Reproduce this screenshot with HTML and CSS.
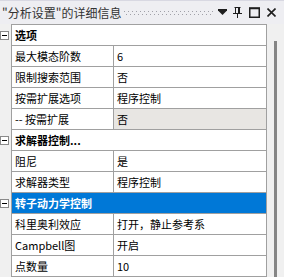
FILE: index.html
```html
<!DOCTYPE html>
<html lang="zh-CN">
<head>
<meta charset="UTF-8" />
<title>"分析设置"的详细信息</title>
<link rel="stylesheet" href="styles.css">
</head>
<body>

<div class="panel">
  <div class="titlebar">
    <span class="title">"分析设置"的详细信息</span>
    <span class="grip"></span>
    <div class="tools">
      <svg width="9" height="7" viewBox="0 0 9 7"><polygon points="0,0 9,0 9,1.5 4.5,6 0,1.5" fill="#1e1e1e"/></svg>
      <svg width="9" height="11" viewBox="0 0 9 11"><path d="M1.5 0.5h6 M2.5 0.5v6 M5.5 0.5v6 M6.5 0.5v6 M0 6.5h9 M4.5 6.5v4.5" stroke="#1e1e1e" stroke-width="1" fill="none"/></svg>
      <svg width="11" height="11" viewBox="0 0 11 11"><rect x="0.75" y="1" width="9.5" height="9.25" stroke="#1e1e1e" stroke-width="1.5" fill="none"/><path d="M0 1.5h11" stroke="#1e1e1e" stroke-width="1.5"/></svg>
      <svg width="9" height="9" viewBox="0 0 9 9"><path d="M0.5 0.5l8 8 M8.5 0.5l-8 8" stroke="#1e1e1e" stroke-width="1.6"/></svg>
    </div>
  </div>

  <div class="content">
    <div class="grid">
      <div class="row first cat">
        <div class="gutter"><span class="toggle"></span></div>
        <div class="line"><div class="label">选项</div></div>
      </div>
      <div class="row">
        <div class="gutter"></div>
        <div class="line"><div class="name">最大模态阶数</div><div class="value">6</div></div>
      </div>
      <div class="row">
        <div class="gutter"></div>
        <div class="line"><div class="name">限制搜索范围</div><div class="value">否</div></div>
      </div>
      <div class="row">
        <div class="gutter"></div>
        <div class="line"><div class="name">按需扩展选项</div><div class="value">程序控制</div></div>
      </div>
      <div class="row readonly">
        <div class="gutter"></div>
        <div class="line"><div class="name">-- 按需扩展</div><div class="value">否</div></div>
      </div>
      <div class="row cat">
        <div class="gutter"><span class="toggle"></span></div>
        <div class="line"><div class="label">求解器控制...</div></div>
      </div>
      <div class="row">
        <div class="gutter"></div>
        <div class="line"><div class="name">阻尼</div><div class="value">是</div></div>
      </div>
      <div class="row">
        <div class="gutter"></div>
        <div class="line"><div class="name">求解器类型</div><div class="value">程序控制</div></div>
      </div>
      <div class="row cat selected">
        <div class="gutter"><span class="toggle"></span></div>
        <div class="line"><div class="label">转子动力学控制</div></div>
      </div>
      <div class="row">
        <div class="gutter"></div>
        <div class="line"><div class="name">科里奥利效应</div><div class="value">打开，静止参考系</div></div>
      </div>
      <div class="row">
        <div class="gutter"></div>
        <div class="line"><div class="name">Campbell图</div><div class="value">开启</div></div>
      </div>
      <div class="row">
        <div class="gutter"></div>
        <div class="line"><div class="name">点数量</div><div class="value">10</div></div>
      </div>
    </div>
    <div class="scroll"><div class="thumb"></div></div>
  </div>
</div>

</body>
</html>
```

FILE: styles.css
```css
/* 面板 */
body {
  margin: 0;
  background: #f0f0f0;
  font-family: "Noto Sans CJK SC", "Noto Sans", sans-serif;
  color: #000;
}
.panel {
  width: 284px;
  height: 277px;
  overflow: hidden;
}

/* 标题栏 */
.titlebar {
  height: 24px;
  display: flex;
  align-items: center;
  background: #eeeef2;
  box-sizing: border-box;
  border-top: 1px solid #d8d8e2;
  padding-left: 2px;
}
.title {
  font-size: 12px;
  color: #333;
  white-space: nowrap;
}
.grip {
  flex: 1;
  height: 5px;
  margin: 1px 4px 0 3px;
  background-image:
    repeating-linear-gradient(90deg, #a0a0a8 0 1px, transparent 1px 4px),
    repeating-linear-gradient(90deg, transparent 0 2px, #a0a0a8 2px 3px, transparent 3px 4px);
  background-size: 100% 1px, 100% 1px;
  background-position: 0 0, 0 3px;
  background-repeat: no-repeat;
}
.tools {
  display: flex;
  align-items: center;
  padding-right: 8px;
}
.tools svg { display: block; }
.tools svg + svg { margin-left: 7px; }
.tools svg:nth-child(2) { margin-left: 6px; }

/* 属性表 */
.content {
  display: flex;
}
.grid {
  width: 267px;
}
.row {
  display: flex;
  height: 21px;
}
.row.first {
  height: 22px;
}
.gutter {
  width: 11px;
  flex: none;
  display: flex;
  align-items: center;
}
.toggle {
  position: relative;
  width: 9px;
  height: 9px;
  box-sizing: border-box;
  border: 1px solid #8a8a8a;
  background: #fff;
}
.toggle::after {
  content: "";
  position: absolute;
  left: 1px;
  top: 3px;
  width: 5px;
  height: 1px;
  background: #000;
}
.line {
  flex: 1;
  display: flex;
  background: #fff;
  border-left: 1px solid #a0a0a0;
  border-right: 1px solid #a0a0a0;
  border-bottom: 1px solid #a0a0a0;
  font-size: 11px;
  line-height: 20px;
  white-space: nowrap;
}
.first .line {
  border-top: 1px solid #a0a0a0;
}
.name {
  width: 102px;
  flex: none;
  box-sizing: border-box;
  border-right: 1px solid #a0a0a0;
  padding-left: 3px;
}
.value {
  flex: 1;
  padding-left: 3px;
}
.label {
  padding-left: 3px;
  font-weight: bold;
}
.readonly .value {
  background: #e8e6e3;
}
.selected .line {
  background: #0078d7;
  color: #fff;
}

/* 滚动条 */
.scroll {
  width: 17px;
  display: flex;
  flex-direction: column;
  padding-top: 17px;
}
.thumb {
  flex: 1;
  width: 3px;
  margin-left: 7px;
  background: #858585;
}
```
